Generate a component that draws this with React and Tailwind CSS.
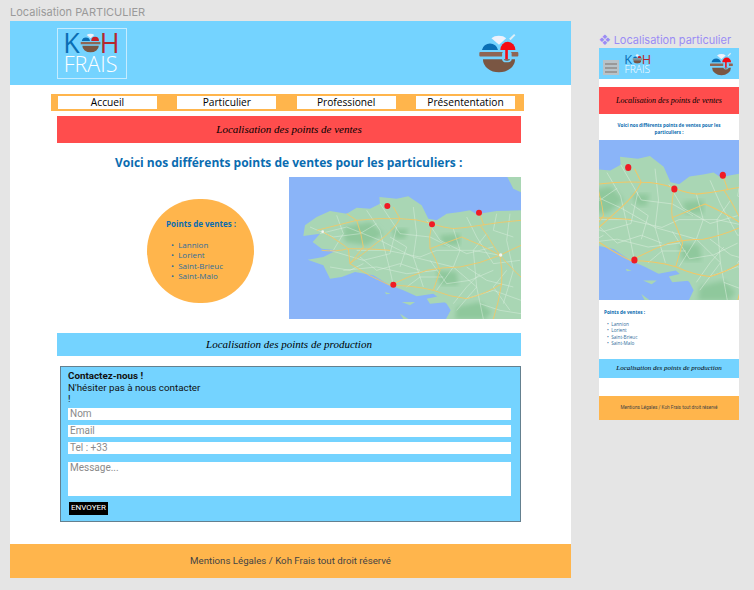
const roads = [
  "M110,180 Q170,165 230,150 Q300,142 360,145 Q410,145 456,160 Q490,172 520,175 Q560,172 600,165 Q660,155 723,150",
  "M130,185 Q180,215 205,235 L210,280 Q270,320 330,345 Q380,320 440,300 Q490,290 540,290 Q600,280 660,255 Q690,240 723,225",
  "M456,160 Q445,200 450,235 L545,200 Q610,225 660,255",
  "M600,165 Q620,190 640,225 L660,255 Q668,300 665,340 Q655,400 640,446",
  "M330,345 Q400,345 460,360 Q510,380 560,385 Q620,370 665,340",
  "M340,110 L360,145 Q340,180 300,210 Q250,250 210,280",
  "M200,130 L230,150 Q245,190 250,230 L210,280",
  "M597,127 L612,165",
  "M460,360 Q470,330 480,300 Q465,260 450,235",
  "M125,240 Q170,245 205,235 Q280,235 330,240",
  "M660,255 Q700,300 723,320",
];

const whiteRoads = [
  "M120,190 L200,170 L300,210 L400,260 L520,290 L590,350 L610,446",
  "M230,240 L320,240 L420,260 L470,240 L580,240 L660,255",
  "M260,120 L300,180 L330,300 L340,345",
  "M400,110 L410,190 L400,260 L430,350",
  "M520,175 L540,240 L520,290 L470,360",
  "M620,190 L580,240 L590,350 L530,420",
  "M690,130 L680,210 L700,300 L670,400",
  "M150,240 L250,270 L330,250 L350,170",
  "M560,385 L640,360 L723,390",
  "M190,300 L290,290 L380,310 L470,300",
  "M90,170 L160,200 L240,190 L290,160",
  "M170,135 L190,190 L160,240",
  "M300,100 L360,190 L450,200 L510,230",
  "M440,150 L480,210 L560,250 L640,230",
  "M560,140 L590,200 L640,280 L720,270",
  "M240,260 L290,300 L360,280 L420,300",
  "M450,270 L500,340 L570,330 L640,300",
  "M560,290 L620,330 L700,350",
  "M600,400 L660,420 L723,430",
  "M380,350 L420,320 L490,320",
  "M520,400 L560,350 L600,310",
  "M150,290 L210,300 L250,280",
  "M650,130 L640,180 L700,200",
  "M330,200 L380,230 L360,290",
  "M680,300 L640,350 L690,420",
];

const forests = [
  "M190,170 L270,155 L310,190 L260,225 L195,215 Z",
  "M470,300 L530,305 L535,345 L480,345 Z",
  "M530,410 L600,395 L635,425 L615,446 L525,446 Z",
  "M335,175 L385,175 L375,205 L345,205 Z",
  "M480,195 L540,190 L540,225 L490,225 Z",
];

const pins = [
  [322, 107],
  [456, 162],
  [597, 127],
  [340, 343],
];

const MapArt = ({ viewBox, id, className }) => (
  <svg viewBox={viewBox} preserveAspectRatio="none" className={className}>
    <defs>
      <filter id={id}>
        <feGaussianBlur stdDeviation="7" />
      </filter>
    </defs>
    <rect x="27" y="20" width="696" height="426" fill="#8AB4F8" />
    <path
      d="M723,120 L650,122 L612,128 L590,132 L570,120 L540,125 L500,130 L470,150 L445,145 L425,105 L385,78 L350,85 L298,80 L300,100 L270,115 L230,112 L200,130 L150,122 L110,140 L75,165 L70,197 L120,190 L98,215 L125,235 L170,240 L130,260 L83,268 L130,285 L150,325 L185,320 L225,305 L280,315 L330,345 L370,360 L410,378 L460,370 L500,400 L512,420 L498,446 L723,446 Z"
      fill="#A9D6B4"
    />
    <path d="M682,20 L723,20 L723,66 L700,55 Z" fill="#A9D6B4" />
    <path d="M360,430 L385,446 L370,446 Z M315,365 L332,370 L318,372 Z M365,395 L405,395 L390,405 Z M440,385 L490,375 L505,395 L450,400 Z" fill="#A9D6B4" />
    {forests.map((d) => (
      <path key={d} d={d} fill="#8FC89C" filter={`url(#${id})`} />
    ))}
    {whiteRoads.map((d) => (
      <path key={d} d={d} fill="none" stroke="#DDEFE0" strokeWidth="1.4" />
    ))}
    {roads.map((d) => (
      <path key={d} d={d} fill="none" stroke="#F2C766" strokeWidth="2.6" />
    ))}
    <circle cx="662" cy="254" r="5" fill="#F4F4F0" />
    <circle cx="128" cy="184" r="4" fill="#F4F4F0" />
    {pins.map(([cx, cy]) => (
      <circle key={cx} cx={cx} cy={cy} r="9" fill="#F01B24" />
    ))}
  </svg>
);

const BowlIcon = ({ className, notch = "#74D3FF" }) => (
  <svg viewBox="538 90 120 122" className={className}>
    <path d="M575,106 A28,18 0 0 1 620,106 L598,126 Z" fill="#EEF1FB" />
    <path d="M631,110 L646,95" stroke="#DCEFF7" strokeWidth="6" />
    <path d="M546,142 A25,25 0 0 1 595,142 Z" fill="#0A6EB4" />
    <path d="M602,142 A23,25 0 0 1 648,142 Z" fill="#F50A14" />
    <rect x="538" y="148" width="72" height="14" rx="3" fill="#8F6553" />
    <rect x="634" y="148" width="23" height="14" rx="3" fill="#8F6553" />
    <path d="M549,170 L647,170 A49,40 0 0 1 549,170 Z" fill="#7A5643" />
    <path d="M610,150 L610,170 Q610,177 620,177 Q634,177 634,170 L634,150" fill="none" stroke={notch} strokeWidth="5" />
    <rect x="617" y="140" width="8" height="30" fill="#F50A14" />
  </svg>
);

// logo drawn at 70x51, scaled by the wrapper
const Logo = ({ className }) => (
  <svg viewBox="0 0 70 51" className={`overflow-visible ${className}`}>
    <text x="5" y="25" fontSize="28" fill="#0A6EB4" fontFamily="Open Sans, sans-serif">K</text>
    <text x="43" y="25" fontSize="28" fill="#B5282E" fontFamily="Open Sans, sans-serif">H</text>
    <svg x="23" y="3" width="21" height="22" viewBox="538 90 120 122">
      <path d="M575,106 A28,18 0 0 1 620,106 L598,126 Z" fill="#EEF1FB" />
      <path d="M546,142 A25,25 0 0 1 595,142 Z" fill="#0A6EB4" />
      <path d="M602,142 A23,25 0 0 1 648,142 Z" fill="#C8202A" />
      <rect x="538" y="148" width="120" height="14" fill="#8F6553" />
      <path d="M549,170 L647,170 A49,40 0 0 1 549,170 Z" fill="#7A5643" />
    </svg>
    <text x="5.5" y="45" fontSize="22.5" fill="#FFFFFF" fontFamily="Open Sans, sans-serif" fontWeight="300">FRAIS</text>
  </svg>
);

const NavItem = ({ label }) => (
  <div className="flex h-[13px] w-[99px] items-center justify-center bg-white text-[10.2px] font-medium text-black">
    {label}
  </div>
);

const SCRIPT = "font-['Liberation_Serif',serif] italic text-black";

const Field = ({ placeholder, className }) => (
  <div className={`w-[443px] bg-white pl-[2px] font-['Roboto',sans-serif] text-[10px] leading-[12px] text-[#8a8a8a] ${className}`}>
    {placeholder}
  </div>
);

const App = () => {
  return (
    <div className="relative h-[590px] w-[754px] overflow-hidden bg-[#e5e5e5] font-['Open_Sans',sans-serif]">
      <div className="absolute left-[10px] top-[5px] font-['Inter',sans-serif] text-[11px] leading-[14px] text-[#9a9a9a]">
        Localisation PARTICULIER
      </div>

      <div className="absolute left-[599px] top-[33px] font-['Inter',sans-serif] text-[11px] leading-[14px] text-[#9a8cf5]">
        ❖ Localisation particulier
      </div>

      {/* Desktop frame */}

      <div className="absolute left-[10px] top-[21px] h-[557px] w-[561px] bg-white">
        <div className="flex h-[64px] items-center justify-between bg-[#74D3FF] pl-[47px] pr-[52px]">
          <Logo className="h-[51px] w-[70px] border border-[#c5ecff]" />
          <BowlIcon className="h-[40px] w-[40px]" />
        </div>

        <div className="ml-[41px] mt-[9px] flex h-[17px] w-[473px] items-center justify-between bg-[#FFB54C] px-[7px] pr-[9px]">
          <NavItem label="Accueil" />
          <NavItem label="Particulier" />
          <NavItem label="Professionel" />
          <NavItem label="Présententation" />
        </div>

        <div className={`ml-[47px] mt-[5px] flex h-[27px] w-[464px] items-center justify-center bg-[#FF4D4D] text-[11px] ${SCRIPT}`}>
          Localisation des points de ventes
        </div>

        <h1 className="mt-[12px] h-[16px] pl-[105px] text-[12px] font-bold leading-[16px] text-[#0A6CB0]">
          Voici nos différents points de ventes pour les particuliers :
        </h1>

        <div className="mt-[6px] flex pl-[137px]">
          <div className="mt-[22px] h-[104px] w-[107px] rounded-full bg-[#FFB54C] pl-[19px] pt-[20px] text-[8px] leading-[10.5px] text-[#0A6CB0]">
            <p className="font-bold">Points de ventes :</p>
            <ul className="mt-[10px] pl-[5px] text-[#2f6d9c]">
              <li>• &nbsp;Lannion</li>
              <li>• &nbsp;Lorient</li>
              <li>• &nbsp;Saint-Brieuc</li>
              <li>• &nbsp;Saint-Malo</li>
            </ul>
          </div>
          <MapArt id="blur-desktop" viewBox="27 20 696 426" className="ml-[35px] h-[142px] w-[232px]" />
        </div>

        <div className={`ml-[47px] mt-[14px] flex h-[23px] w-[464px] items-center justify-center bg-[#74D3FF] text-[11px] ${SCRIPT}`}>
          Localisation des points de production
        </div>

        <div className="ml-[50px] mt-[10px] h-[156px] w-[461px] border border-[#64808f] bg-[#74D3FF] pl-[7px] pt-[3px] font-['Roboto',sans-serif] text-[9.8px] leading-[11.5px] text-[#111]">
          <p className="font-bold">Contactez-nous !</p>
          <p>N'hésiter pas à nous contacter</p>
          <p>!</p>
          <Field placeholder="Nom" className="mt-[3px] h-[12px]" />
          <Field placeholder="Email" className="mt-[5px] h-[12px]" />
          <Field placeholder="Tel : +33" className="mt-[5px] h-[12px]" />
          <Field placeholder="Message..." className="mt-[8px] h-[34px]" />
          <div className="ml-[1px] mt-[6px] flex h-[13px] w-[39px] items-center justify-center bg-black text-[8px] text-white">
            ENVOYER
          </div>
        </div>

        <div className="mt-[22px] flex h-[34px] items-center justify-center bg-[#FFB54C] font-['Roboto',sans-serif] text-[9.7px] text-[#444]">
          Mentions Légales / Koh Frais tout droit réservé
        </div>
      </div>

      {/* Mobile frame */}

      <div className="absolute left-[599px] top-[48px] h-[372px] w-[140px] bg-white">
        <div className="flex h-[31px] items-center justify-between bg-[#74D3FF] pl-[4px] pr-[6px]">
          <div className="flex items-center">
            <div className="mt-[8px] flex h-[15px] w-[16px] flex-col justify-center gap-[2px] bg-[#b8c2c8] px-[2px]">
              <div className="h-[2px] bg-[#999]" />
              <div className="h-[2px] bg-[#999]" />
              <div className="h-[2px] bg-[#999]" />
            </div>
            <Logo className="ml-[3px] h-[24px] w-[32px]" />
          </div>
          <BowlIcon className="h-[24px] w-[23px]" />
        </div>

        <div className={`mt-[8px] flex h-[27px] items-center justify-center bg-[#FF4D4D] text-[8px] ${SCRIPT}`}>
          Localisation des points de ventes
        </div>

        <p className="mx-auto mt-[8px] h-[18px] w-[120px] text-center text-[4.6px] font-bold leading-[7px] text-[#0A6CB0]">
          Voici nos différents points de ventes pour les particuliers :
        </p>

        <MapArt id="blur-mobile" viewBox="237 37 407 408" className="h-[160px] w-[140px]" />

        <div className="h-[59px] pl-[5px] pt-[9px] text-[4.7px] leading-[6.2px] text-[#0A6CB0]">
          <p className="font-bold">Points de ventes :</p>
          <ul className="mt-[6px] pl-[3px] text-[#2f6d9c]">
            <li>• &nbsp;Lannion</li>
            <li>• &nbsp;Lorient</li>
            <li>• &nbsp;Saint-Brieuc</li>
            <li>• &nbsp;Saint-Malo</li>
          </ul>
        </div>

        <div className={`flex h-[19px] items-center justify-center bg-[#74D3FF] text-[7px] ${SCRIPT}`}>
          Localisation des points de production
        </div>

        <div className="mt-[18px] flex h-[24px] items-center justify-center bg-[#FFB54C] font-['Roboto',sans-serif] text-[4.7px] text-[#444]">
          Mentions Légales / Koh Frais tout droit réservé
        </div>
      </div>
    </div>
  );
};

export default App;
